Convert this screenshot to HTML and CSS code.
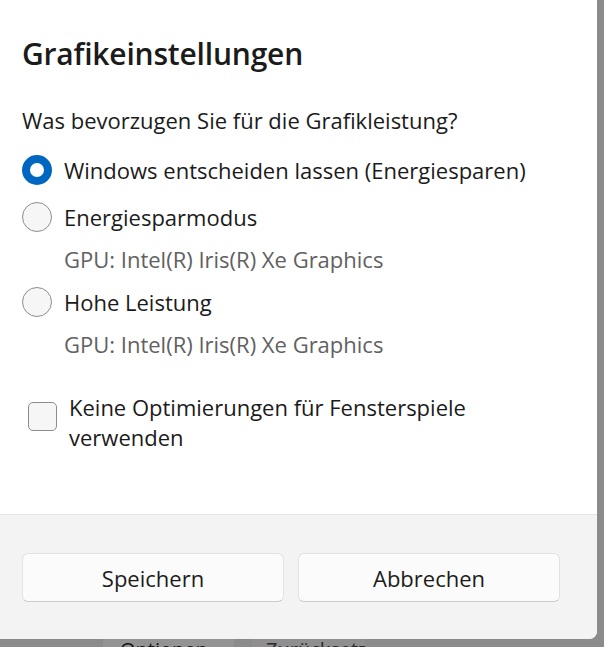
FILE: index.html
```html
<!DOCTYPE html>
<html lang="de">
<head>
<meta charset="utf-8">
<title>Grafikeinstellungen</title>
<link rel="stylesheet" href="styles.css">
</head>
<body>
<div class="backdrop">
  <div class="dialog">
    <div class="content">
      <h1 class="title">Grafikeinstellungen</h1>
      <p class="question">Was bevorzugen Sie für die Grafikleistung?</p>
      <div class="options">
        <label class="option first-option">
          <span class="radio checked"></span>
          <span class="option-text">Windows entscheiden lassen (Energiesparen)</span>
        </label>
        <div class="option-group">
          <label class="option">
            <span class="radio"></span>
            <span class="option-text">Energiesparmodus</span>
          </label>
          <div class="gpu">GPU: Intel(R) Iris(R) Xe Graphics</div>
        </div>
        <div class="option-group">
          <label class="option">
            <span class="radio"></span>
            <span class="option-text">Hohe Leistung</span>
          </label>
          <div class="gpu">GPU: Intel(R) Iris(R) Xe Graphics</div>
        </div>
      </div>
      <label class="check-row">
        <span class="checkbox"></span>
        <span class="check-text">Keine Optimierungen für Fensterspiele verwenden</span>
      </label>
    </div>
    <div class="footer">
      <button class="btn">Speichern</button>
      <button class="btn">Abbrechen</button>
    </div>
  </div>
  <div class="behind">
    <span class="behind-btn first">Optionen</span>
    <span class="behind-btn second">Zurücksetzen</span>
  </div>
</div>
</body>
</html>
```

FILE: styles.css
```css
* { box-sizing: border-box; }
html, body {
  margin: 0;
  padding: 0;
  background: #8b8b8b;
  font-family: "Open Sans", "Noto Sans", sans-serif;
  color: #1b1b1b;
  overflow: hidden;
}
.backdrop {
  width: 604px;
  height: 647px;
  overflow: hidden;
}
.dialog {
  width: 597px;
  height: 639px;
  background: #ffffff;
  border-bottom-right-radius: 8px;
  overflow: hidden;
  display: flex;
  flex-direction: column;
}
.content {
  height: 515px;
  padding: 34px 0 0 22px;
  border-bottom: 1px solid #e5e5e5;
}
.title {
  margin: 0;
  font-size: 30px;
  font-weight: 600;
  line-height: 40px;
  letter-spacing: -0.2px;
}
.question {
  margin: 31px 0 0 0;
  font-size: 22px;
  line-height: 30px;
}
.options {
  margin-top: 20px;
  display: flex;
  flex-direction: column;
  gap: 13px;
}
.first-option { margin-bottom: 4px; }
.option-group {
  display: flex;
  flex-direction: column;
  gap: 12px;
}
.option {
  display: flex;
  align-items: center;
  gap: 12px;
  height: 30px;
}
.radio {
  width: 30px;
  height: 30px;
  border-radius: 50%;
  border: 1.5px solid #8d8d8d;
  background: #f6f6f6;
  flex: none;
}
.radio.checked {
  border: 8px solid #0067c0;
  background: #ffffff;
}
.option-text {
  font-size: 22px;
  line-height: 30px;
  white-space: nowrap;
}
.gpu {
  padding-left: 42px;
  font-size: 22px;
  line-height: 30px;
  color: #616161;
}
.check-row {
  margin: 33px 0 0 6px;
  display: flex;
  align-items: flex-start;
  gap: 12px;
  width: 480px;
}
.checkbox {
  margin-top: 10px;
  width: 29px;
  height: 29px;
  border: 1.5px solid #8d8d8d;
  border-radius: 5px;
  background: #f6f6f6;
  flex: none;
}
.check-text {
  font-size: 22px;
  line-height: 30px;
  width: 420px;
}
.footer {
  flex: 1;
  background: #f3f3f3;
  display: flex;
  gap: 14px;
  padding: 38px 0 0 22px;
}
.btn {
  width: 262px;
  height: 49px;
  background: #fbfbfb;
  border: 1px solid #e3e3e3;
  border-bottom-color: #cccccc;
  border-radius: 6px;
  font-family: inherit;
  font-size: 22px;
  color: #1b1b1b;
  padding: 0;
}
.behind {
  display: flex;
  height: 8px;
  padding-left: 103px;
  gap: 18px;
  overflow: hidden;
}
.behind-btn {
  display: block;
  height: 8px;
  background: #939393;
  font-size: 20px;
  line-height: 22px;
  color: #141414;
  overflow: hidden;
}
.behind-btn.first { width: 131px; padding-left: 17px; }
.behind-btn.second { width: 113px; padding-left: 14px; color: #2a2a2a; background: #8f8f8f; }
```
